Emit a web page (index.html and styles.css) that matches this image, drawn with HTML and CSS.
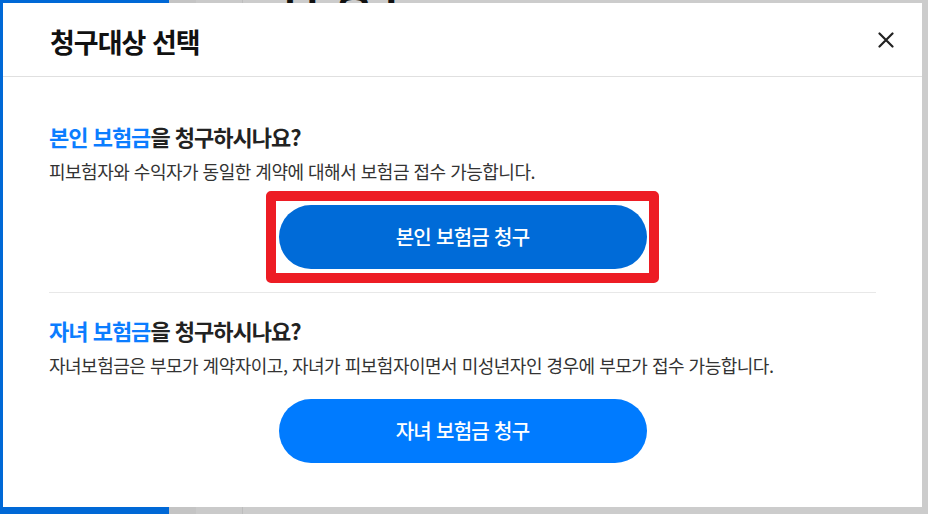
FILE: index.html
```html
<!DOCTYPE html>
<html lang="ko">
<head>
  <meta charset="UTF-8">
  <meta name="viewport" content="width=device-width, initial-scale=1">
  <title>보험금 청구 – 청구대상 선택</title>
  <link rel="stylesheet" href="styles.css">
</head>
<body>

  <!-- PAGE BEHIND THE DIM -->
  <div class="page">
    <div class="sidebar"></div>
    <div class="main">
      <div class="main-strip"></div>
      <h1 class="page-title">금 청구</h1>
    </div>
  </div>

  <!-- TARGET SELECT MODAL -->
  <div class="modal" role="dialog" aria-labelledby="modalTitle">
    <div class="modal-head">
      <h2 id="modalTitle">청구대상 선택</h2>
      <button class="close-btn" aria-label="닫기">
        <svg width="16" height="16" viewBox="0 0 16 16">
          <path d="M1.5 1.5 L14.5 14.5 M14.5 1.5 L1.5 14.5" stroke="#222" stroke-width="2.2" stroke-linecap="round" fill="none"/>
        </svg>
      </button>
    </div>

    <div class="modal-body">
      <div class="claim">
        <h3><em>본인 보험금</em>을 청구하시나요?</h3>
        <p>피보험자와 수익자가 동일한 계약에 대해서 보험금 접수 가능합니다.</p>
        <div class="claim-action">
          <span class="mark">
            <button class="claim-btn is-active">본인 보험금 청구</button>
          </span>
        </div>
      </div>

      <div class="claim">
        <h3><em>자녀 보험금</em>을 청구하시나요?</h3>
        <p>자녀보험금은 부모가 계약자이고, 자녀가 피보험자이면서 미성년자인 경우에 부모가 접수 가능합니다.</p>
        <div class="claim-action">
          <button class="claim-btn">자녀 보험금 청구</button>
        </div>
      </div>
    </div>
  </div>

</body>
</html>
```

FILE: styles.css
```css
* { margin: 0; padding: 0; box-sizing: border-box; }
body {
  font-family: "Noto Sans CJK KR", "Noto Sans", sans-serif;
  color: #222; background: #ccc; height: 514px; overflow: hidden;
}

/* PAGE BEHIND */
.page { display: flex; height: 514px; }
.sidebar { width: 169px; background: #0068d6; }
.main { flex: 1; position: relative; }
.main-strip {
  width: 74px; height: 514px;
  background: linear-gradient(90deg, #c4c4c4 27px, #cacaca 27px);
  border-right: 1px solid #bdbdbd;
}
.page-title {
  position: absolute; top: -44px; left: 112px;
  font-size: 44px; font-weight: 700; color: #111; letter-spacing: -1px;
}

/* MODAL */
.modal {
  position: absolute; top: 3px; left: 3px; width: 919px;
  background: #fff;
}
.modal-head {
  height: 74px; padding: 0 28px 0 47px;
  display: flex; align-items: center; justify-content: space-between;
  border-bottom: 1px solid #e0e0e0;
}
.modal-head h2 { font-size: 27px; font-weight: 700; color: #111; letter-spacing: -1px; margin-top: 4px; }
.close-btn {
  width: 16px; height: 16px; border: none; background: none;
  cursor: pointer; display: flex;
}

.modal-body { padding: 20px 46px 21px; }
.claim { padding: 24px 0 23px; }
.claim + .claim { border-top: 1px solid #e8e8e8; padding-top: 22px; }
.claim h3 { font-size: 22px; font-weight: 700; color: #222; letter-spacing: -1px; line-height: 1.4; }
.claim h3 em { font-style: normal; color: #0b7dff; }
.claim p { font-size: 18px; color: #333; letter-spacing: -0.5px; line-height: 1.5; margin-top: 6px; }

.claim-action { display: flex; justify-content: center; margin-top: 20px; }
.claim-btn {
  width: 368px; height: 64px; border: none; border-radius: 32px;
  background: #007bff; color: #fff; cursor: pointer;
  font-family: inherit; font-size: 20px; font-weight: 500; letter-spacing: -0.7px;
}
.claim-btn.is-active { background: #006bd8; }

/* review marker around the selected button */
.mark { position: relative; display: flex; }
.mark::after {
  content: ""; position: absolute;
  top: -14px; bottom: -14px; left: -13px; right: -12px;
  border: 10px solid #ed1c24; border-radius: 5px;
  pointer-events: none;
}
```
